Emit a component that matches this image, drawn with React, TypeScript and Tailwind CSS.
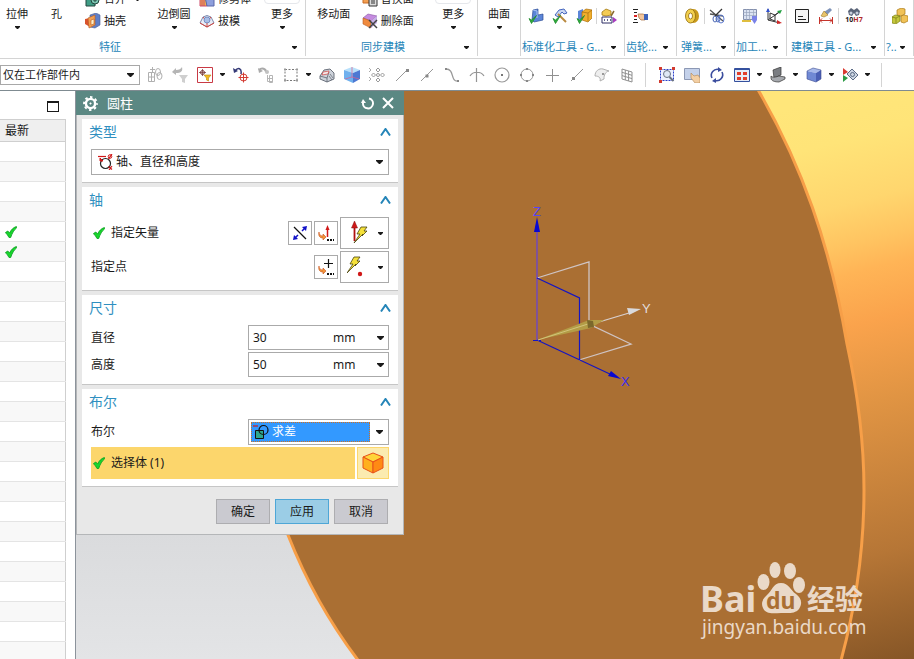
import { Fragment, useState } from "react";
import type { ReactNode } from "react";

const Arrow = ({ className = "" }: { className?: string }) => (
  <svg className={`pointer-events-none h-[3px] w-[5px] shrink-0 ${className}`} viewBox="0 0 5 3">
    <path d="M0 0h5v1L3 3H2L0 1z" fill="#1a1a1a" />
  </svg>
);

const WideArrow = ({ className = "" }: { className?: string }) => (
  <svg className={`pointer-events-none h-1 w-[7px] shrink-0 ${className}`} viewBox="0 0 7 4">
    <path d="M0 0h7v1L4 4H3L0 1z" fill="#1a1a1a" />
  </svg>
);

const Tick = () => (
  <svg className="h-3 w-3 shrink-0" viewBox="0 0 12 12">
    <path
      d="M.4 6.600l2.400-1.600 1.800 2C6 4 8 1.600 11.400.5l.3 1.300C9 4 7.200 7 5.700 11.500H4C3 9.500 1.800 8 .4 6.600z"
      fill="#17d62c"
      stroke="#0a9a20"
      strokeWidth=".8"
    />
  </svg>
);

const Icon = ({ children, size = "h-4 w-4" }: { children: ReactNode; size?: string }) => (
  <svg className={`shrink-0 ${size}`} viewBox="0 0 16 16" fill="none">
    {children}
  </svg>
);

const GreenTick = () => <path d="M1 10.500l2.500 1.500L8.500 7.500l-5 8z" fill="#2fae3c" stroke="#1f8a2c" strokeWidth=".8" />;

const icons: Record<string, ReactNode> = {
  unite: (
    <>
      <path d="M1 3h9v12H1z" fill="#3f9d86" stroke="#24463f" />
      <circle cx="10" cy="9" r="4" fill="#7cc6b2" stroke="#24463f" />
      <path d="M10 7v4M8 9h4" stroke="#24463f" />
    </>
  ),
  shell: (
    <>
      <path d="M5 2l6-2 4 2v10l-5 3-5-1z" fill="#5f7fc8" stroke="#4d5f96" strokeWidth=".6" />
      <path d="M0 6l5-1v9l-5-3z" fill="#d9532d" />
      <path d="M3 5l7-3v10l-6 3z" fill="#f3a052" stroke="#b55a22" strokeWidth=".6" />
      <path d="M6 7l3-1v5l-3 1z" fill="#fff0c8" stroke="#b55a22" strokeWidth=".6" />
    </>
  ),
  trim: (
    <>
      <path d="M1 4h7v11H1z" fill="#f0b44c" stroke="#cc4a6a" />
      <path d="M6 6c4-3 7 0 9 2v7H8z" fill="#8e9fdc" stroke="#5b66a8" />
      <path d="M3 5v10M5 5v10" stroke="#cc4a6a" />
    </>
  ),
  draft: (
    <>
      <path d="M1 10L4 4q4-3 8 0l3 6-7 4z" fill="#e8edf7" stroke="#7d88ad" />
      <path d="M1 10l7 4 7-4M8 8v6M4 4l4 5 4-5" stroke="#d7473d" />
      <circle cx="8" cy="7" r="3" fill="#a9bfe8" stroke="#5f78b5" strokeWidth=".7" />
    </>
  ),
  replace: (
    <>
      <path d="M1 2h9v10H1z" fill="#f3a052" stroke="#c96a24" />
      <path d="M7 8h8v7H7z" fill="#dcdcdc" stroke="#333" />
      <path d="M9 10h4M9 12h4" stroke="#333" />
    </>
  ),
  remove: (
    <>
      <path d="M1 5l5-4 9 2-6 5z" fill="#c58be0" stroke="#8a55a5" strokeWidth=".6" />
      <path d="M1 5l8 3v7l-8-4z" fill="#f08b3e" stroke="#b55a22" strokeWidth=".6" />
      <path d="M9 8l6-5v7l-6 5z" fill="#c7b1e6" />
      <path d="M7 7l8 8M15 7l-8 8" stroke="#444" strokeWidth="1.500" />
    </>
  ),
  std1: (
    <>
      <path d="M5 2l5-1v6l5-1v6l-9 2-2-2z" fill="#5c86d8" stroke="#2d4c96" strokeWidth=".7" />
      <path d="M5 2l4 1v7" stroke="#a9c3f4" />
      <GreenTick />
    </>
  ),
  std2: (
    <>
      <path d="M3 7l4-5 5-1 3 4-3 1-2-2-4 5z" fill="#c9d6f2" stroke="#3458b8" strokeWidth=".9" />
      <path d="M6 6l8 8" stroke="#b98a3f" strokeWidth="2" />
      <GreenTick />
    </>
  ),
  std3: (
    <>
      <path d="M2 3l5-2v10l-5 1z" fill="#5c86d8" />
      <path d="M6 4l4-3 6 1v8l-4 4-6-2z" fill="#f0ae2c" stroke="#a86d10" strokeWidth=".7" />
      <path d="M6 4l6 1v8M12 5l4-3" stroke="#a86d10" strokeWidth=".7" />
      <GreenTick />
    </>
  ),
  std4: (
    <>
      <path d="M1 4l4-3 5 2v4l-5 1-4-1z" fill="#f4cc55" stroke="#a37a14" strokeWidth=".8" />
      <path d="M13 3l-3 5" stroke="#8a6a30" strokeWidth="1.500" />
      <path d="M1 9h10v6H1z" fill="#fff" stroke="#2e2e66" />
      <path d="M3 12h1M6 12h1M9 12h1" stroke="#2e2e66" strokeWidth="1.500" />
      <path d="M12 9l4 3-4 3z" fill="#a93bc0" />
    </>
  ),
  gear: (
    <>
      <path d="M1 1.500h5M2 4.500h3M2 11.500h3M1 14.500h5" stroke="#222" />
      <path d="M6 6h5l2 1v5H9L7 10z" fill="#f3c69b" stroke="#a86b3a" strokeWidth=".7" />
      <path d="M12 6h4v6h-4z" fill="#3f63b8" />
      <path d="M2 8h3" stroke="#d22" strokeWidth="2" />
    </>
  ),
  spring: (
    <>
      <ellipse cx="9.500" cy="8" rx="5.500" ry="7" fill="#c99a1c" />
      <ellipse cx="6.500" cy="8" rx="5" ry="7" fill="#f2cf4d" stroke="#8f6a0c" strokeWidth=".8" />
      <ellipse cx="6.500" cy="8" rx="2" ry="3" fill="#fff" stroke="#8f6a0c" strokeWidth=".8" />
    </>
  ),
  cutSpring: (
    <>
      <path d="M1 2l13 11M1 6l13 2" stroke="#555" strokeWidth="1.300" />
      <ellipse cx="6" cy="11" rx="2" ry="3" stroke="#4a67b5" />
      <ellipse cx="9" cy="11" rx="2" ry="3" stroke="#4a67b5" />
      <ellipse cx="12" cy="11" rx="3" ry="4" stroke="#5d7bd0" />
      <path d="M13 1L6 8" stroke="#333" strokeWidth="1.300" />
    </>
  ),
  mill: (
    <>
      <path d="M1.500 1.500h13v10h-13z" fill="#dbe3f2" stroke="#8490ad" />
      <path d="M1 4.500h13M1 7.500h13M4.500 1v11M7.500 1v11M11.500 1v11" stroke="#9aa5bd" strokeWidth=".7" />
      <path d="M0 13h9" stroke="#dfbe3f" strokeWidth="2" />
      <path d="M10 8h5v4l-2.500 4L10 12z" fill="#7a82e8" />
    </>
  ),
  axes: (
    <>
      <path d="M2 12V1M2 12l12 3M2 12L15 3" stroke="#333" />
      <path d="M4 5l5 2v6L4 11zM9 7l4-3" stroke="#333" />
      <path d="M0 4l2-4 2 4z" fill="#3050d0" />
      <path d="M11 3l5-1-2 4z" fill="#22a040" />
      <path d="M11 12l5 3-5 1z" fill="#d02828" />
    </>
  ),
  note: (
    <>
      <path d="M1.500 1.500h13v13h-13z" fill="#f4f4f4" stroke="#222" />
      <path d="M4 8.500h5M4 11.500h8" stroke="#222" />
    </>
  ),
  brush: (
    <>
      <path d="M12 0l2 2-5 5-3-3z" fill="#7f93b8" />
      <path d="M6 3l4 4-4 2-3-1z" fill="#e9c46a" stroke="#9c7b2b" strokeWidth=".6" />
      <path d="M1.500 9v7M14.500 9v7M2 12.500h12M4 10.500l-2 2 2 2M12 10.500l2 2-2 2" stroke="#c5342c" />
    </>
  ),
  blocks: (
    <>
      <path d="M5 2l4-2 4 1v5l-4 2-4-1z" fill="#f1c257" stroke="#a87919" strokeWidth=".7" />
      <path d="M9 8l3-1 4 1v5l-4 2-3-1z" fill="#f1c257" stroke="#a87919" strokeWidth=".7" />
      <path d="M0 9l3-2 5 1v5l-4 3-4-1z" fill="#c3c73c" stroke="#7b7d14" strokeWidth=".7" />
      <path d="M0 9l4 1v5M4 10l4-2" stroke="#7b7d14" strokeWidth=".7" />
    </>
  ),
  tree: (
    <>
      <path d="M1.500 5.500h6v9h-6zM1.500 10h6M4.500 5v9M5.500 0v5M3 2.500h5" stroke="#b0b0b0" />
      <ellipse cx="11" cy="5" rx="2.500" ry="3.500" stroke="#b0b0b0" />
      <ellipse cx="12.500" cy="9" rx="2.500" ry="3.500" stroke="#b0b0b0" />
    </>
  ),
  resetFilter: (
    <>
      <path d="M0 5l4-4v2c3 0 5-1 6-3 1 4-1 6-6 6v2z" fill="#b5b5b5" />
      <path d="M7 8h9l-3 4v4l-3-1v-3z" fill="#cfcfcf" />
    </>
  ),
  filter: (
    <>
      <path d="M.5.5h15v15H.5z" fill="#fff" stroke="#c93a45" />
      <circle cx="5.500" cy="5.500" r="2" stroke="#7a3b3b" />
      <path d="M5.500 2v7M2 5.500h7" stroke="#7a3b3b" strokeWidth=".8" />
      <path d="M7 8h7l-2.500 3v3l-2-1v-2z" fill="#f3b91e" stroke="#ba860c" strokeWidth=".6" />
    </>
  ),
  undoPick: (
    <>
      <path d="M2 4c3-4 7-3 6 3" stroke="#353a77" strokeWidth="1.500" />
      <path d="M0 1l1 5 4-2z" fill="#353a77" />
      <circle cx="10.500" cy="10.500" r="3.500" stroke="#d33b32" />
      <path d="M10.500 5.500v10M5.500 10.500h10" stroke="#d33b32" />
    </>
  ),
  replay: (
    <>
      <path d="M1 3c3-3 7-1 7 2" stroke="#aaa" strokeWidth="2" />
      <path d="M0 1l1 5 4-2z" fill="#aaa" />
      <circle cx="9" cy="5" r="2" fill="#c2c2c2" />
      <path d="M9.500 8v6.500h5M9.500 11.500h5M11.500 8.500h3v7h-3z" stroke="#b5b5b5" />
    </>
  ),
  marquee: (
    <>
      <path d="M2 2.500h12v11H2z" stroke="#777" strokeDasharray="2 1.500" />
      <path d="M1 1.500h2v2H1zM13 1.500h2v2h-2zM1 12.500h2v2H1zM13 12.500h2v2h-2z" fill="#999" />
    </>
  ),
  faceBody: (
    <>
      <path d="M1 9l4-6 6-1 4 4v6l-7 3-7-3z" fill="#cdd2da" stroke="#5d6470" strokeWidth=".9" />
      <path d="M1 9l7 2 2-6M8 11v4" stroke="#5d6470" strokeWidth=".8" />
      <path d="M4 5l6-1-1 3-6 1z" fill="#f3e9e9" stroke="#d04444" strokeWidth=".7" />
      <path d="M11 7l3 4M10 9l3 4" stroke="#5d6470" strokeWidth=".7" />
    </>
  ),
  cubeBlue: (
    <>
      <path d="M0 3l8-3 8 3-7 3z" fill="#b8e0fb" />
      <path d="M0 3l9 3v10l-9-4z" fill="#6fb0ee" />
      <path d="M9 6l7-3v9l-7 4z" fill="#4d79d3" />
      <path d="M8 0v10M8 10l-7 2M8 10l7 2" stroke="#e05b8b" strokeWidth=".7" />
    </>
  ),
  pattern: (
    <>
      <path d="M0 1l2 2-2 2M0 10l2 2-2 2" stroke="#aaa" />
      <circle cx="9" cy="8" r="1.500" stroke="#999" />
      <path d="M9 1l2 2-2 2-2-2zM9 11l2 2-2 2-2-2zM13.500 6l2 2-2 2-2-2zM4.500 6l2 2-2 2-2-2z" stroke="#999" />
    </>
  ),
  line1: (
    <>
      <path d="M2 14L13 3" stroke="#999" />
      <path d="M12 2h3v3h-3z" fill="#888" />
    </>
  ),
  line2: (
    <>
      <path d="M2 14L14 2" stroke="#999" />
      <path d="M6.500 7.500h3v3h-3z" fill="#888" />
    </>
  ),
  curve: (
    <>
      <path d="M2 2c9 0 4 13 12 12" stroke="#999" strokeWidth="1.300" />
      <path d="M1 1h2v2H1zM13 13h2v2h-2z" fill="#888" />
    </>
  ),
  intersect: <path d="M7.500 1v14M1 9c3-5 11-5 14 0" stroke="#959595" strokeWidth="1.200" />,
  circleCenter: (
    <>
      <circle cx="8" cy="8" r="7" stroke="#999" strokeWidth="1.200" />
      <path d="M7 7h2v2H7z" fill="#777" />
    </>
  ),
  quadrant: (
    <>
      <circle cx="8" cy="8" r="6" stroke="#999" />
      <path d="M7 1h2v2H7zM7 13h2v2H7zM1 7h2v2H1zM13 7h2v2h-2z" fill="#888" />
    </>
  ),
  plus: <path d="M8.500 2v13M2 8.500h13" stroke="#909090" />,
  line3: (
    <>
      <path d="M2 14L14 2" stroke="#999" />
      <path d="M3 10h3v3H3z" fill="#888" />
    </>
  ),
  surface: (
    <>
      <path d="M1 9c0-5 4-8 8-7l6 2c-4 1-5 4-5 8l-4 2c1-3-1-5-5-5z" fill="#eee" stroke="#b0b0b0" />
      <path d="M8 6h2v2H8z" fill="#999" />
    </>
  ),
  grid: <path d="M3 2l10 3v10L3 12zM3 5.300l10 3M3 8.600l10 3M6.300 3v10M9.600 4v10" stroke="#909090" />,
  fit: (
    <>
      <path d="M1.500 2.500h13v11h-13z" fill="#eef2ff" stroke="#2a3fc8" strokeDasharray="2 1" />
      <path d="M0 0h3v3H0zM13 0h3v3h-3zM0 13h3v3H0z" fill="#d23a2f" />
      <circle cx="8" cy="7" r="3.500" fill="#dfe9f5" stroke="#6a7380" />
      <path d="M10.500 10l4 4" stroke="#6a7380" strokeWidth="2" />
    </>
  ),
  pan: (
    <>
      <path d="M.5 1.500h15v11H.5z" fill="#c4d1ea" stroke="#8c98b4" />
      <path d="M7 6l3 3 4-1 2 3v5h-5L7 11z" fill="#f3cfa4" stroke="#b08550" strokeWidth=".6" />
    </>
  ),
  rotate: (
    <>
      <path d="M3 11A6 6 0 0 1 10 2.500M13 5A6 6 0 0 1 6 13.500" stroke="#3b4d9e" strokeWidth="1.600" />
      <path d="M9 0l4 3-4 2zM7 11l-4 3 4 2z" fill="#3b4d9e" />
    </>
  ),
  layout: (
    <>
      <path d="M.5 1.500h15v13H.5z" fill="#e7ecf7" stroke="#34509e" />
      <path d="M1 2h14v1H1z" fill="#34509e" />
      <path d="M3 5h4v3H3zM9 5h4v3H9zM3 10h4v3H3zM9 10h4v3H9z" fill="#e23e2b" />
    </>
  ),
  section: (
    <>
      <path d="M3 3l8-3v8l-7 3z" fill="#7a7d82" stroke="#333" strokeWidth=".7" />
      <path d="M1 9c2 2 5 1 8 0l6 1v2l-6 3c-4 0-8-1-8-4z" fill="#a6a9ae" stroke="#333" strokeWidth=".7" />
    </>
  ),
  shaded: (
    <>
      <path d="M1 4l6-3 8 2-5 3z" fill="#a7b9ea" />
      <path d="M1 4l9 2v9l-9-3z" fill="#7089d4" />
      <path d="M10 6l5-3v9l-5 3z" fill="#4a5fb4" />
      <path d="M1 4l6-3 8 2v9l-5 3-9-3z" stroke="#3c4c90" strokeWidth=".6" />
    </>
  ),
  show: (
    <>
      <path d="M1 1l5 4-5 3z" fill="#da3b32" />
      <path d="M1 8l5 3-5 4z" fill="#2d9c46" />
      <path d="M5 7l5-5 6 6-5 5z" fill="#ccd5e2" stroke="#5b6b85" />
      <circle cx="10.500" cy="7.500" r="2" stroke="#5b6b85" />
    </>
  ),
  type: (
    <>
      <circle cx="8.500" cy="9.500" r="5" stroke="#222" strokeWidth="1.200" />
      <path d="M1 2.500h8" stroke="#d01818" strokeWidth="1.200" />
      <path d="M3 7V4l3 3z" fill="#d01818" stroke="#d01818" />
      <circle cx="13" cy="2.500" r="1.800" stroke="#d01818" />
      <path d="M11.500 5L15 0M11.500 12.500l3.500 3M15 12l-3 4" stroke="#d01818" strokeWidth="1.200" />
    </>
  ),
  reverse: (
    <>
      <path d="M2 2l12 12" stroke="#111" strokeWidth="1.200" />
      <path d="M3 13l3-3M10 6l3-3" stroke="#1010c8" strokeWidth="1.500" />
      <path d="M15 1l-1 5-4-4zM1 15l1-5 4 4z" fill="#1010c8" />
    </>
  ),
  vectorDialog: (
    <>
      <path d="M9.500 4v8" stroke="#d01818" strokeWidth="1.500" />
      <path d="M7.500 5l2-5 2 5z" fill="#d01818" />
      <path d="M1 7c0 3 2 4 4 4V9l3 3-3 3v-2C2 13 0 11 1 7z" fill="#f2963a" stroke="#c8501c" strokeWidth=".6" />
      <path d="M9 14h2v2H9zM12 14h2v2h-2zM15 14h1v2h-1z" fill="#111" />
    </>
  ),
  pointDialog: (
    <>
      <path d="M10.500 0v9M6 4.500h9" stroke="#111" strokeWidth="1.200" />
      <path d="M1 7c0 3 2 4 4 4V9l3 3-3 3v-2C2 13 0 11 1 7z" fill="#f2963a" stroke="#c8501c" strokeWidth=".6" />
      <path d="M9 14h2v2H9zM12 14h2v2h-2zM15 14h1v2h-1z" fill="#111" />
    </>
  ),
  boolean: (
    <>
      <path d="M2.500 6.500h8v8h-8z" fill="#2ea68c" stroke="#111" />
      <circle cx="10.500" cy="6" r="4.500" stroke="#111" strokeWidth="1.200" />
      <path d="M0 2h5" stroke="#d01818" strokeWidth="1.200" />
    </>
  ),
};

const BigButton = ({ text, arrow, boxed, width }: { text: string; arrow?: boolean; boxed?: boolean; width: string }) => (
  <button className={`relative flex flex-col items-center pt-1.5 text-[11px] leading-4 ${width}`}>
    {boxed && <span className="absolute -top-2 h-3 w-9 rounded border border-gray-200" />}
    {text}
    {arrow && <Arrow className="mt-1" />}
  </button>
);

const Stack = ({ items, width }: { items: [string, string, boolean?][]; width: string }) => (
  <div className={`-mt-3 ${width}`}>
    {items.map(([icon, text, arrow]) => (
      <button key={text} className="flex h-[22px] items-center gap-[3px] text-[11px] whitespace-nowrap">
        <Icon>{icons[icon]}</Icon>
        {text}
        {arrow && <Arrow className="ml-1.5" />}
      </button>
    ))}
  </div>
);

const Group = ({
  label,
  width,
  align = "pl-px",
  children,
}: {
  label?: string;
  width: string;
  align?: string;
  children: ReactNode;
}) => (
  <section className={`flex h-14 shrink-0 flex-col border-r border-[#d4d4d4] ${width}`}>
    <div className="flex h-10 items-start">{children}</div>
    {label && (
      <div className="flex h-[18px] items-center justify-between pr-2 text-[11px] leading-4 whitespace-nowrap text-[#2585b8]">
        <span className={align}>{label}</span>
        <Arrow />
      </div>
    )}
  </section>
);

// "|" stands for a divider between two tools
const Tools = ({ names }: { names: string[] }) => (
  <div className="flex pt-2 pl-[3px]">
    {names.map((name, i) =>
      name === "|" ? (
        <span key={i} className="h-4 w-px bg-[#d4d4d4]" />
      ) : (
        <button key={i} className="flex w-6 justify-center" aria-label={name}>
          <Icon>{icons[name]}</Icon>
        </button>
      )
    )}
  </div>
);

const Ribbon = () => (
  <header className="flex h-[59px] shrink-0 overflow-hidden border-b border-[#d4d4d4]">
    <Group label="特征" width="w-[306px]" align="flex-1 pr-[72px] text-center">
      <BigButton text="拉伸" arrow width="w-[34px]" />
      <BigButton text="孔" width="w-[45px]" />
      <Stack
        items={[
          ["unite", "合并", true],
          ["shell", "抽壳"],
        ]}
        width="w-[72px] pl-1.5"
      />
      <BigButton text="边倒圆" arrow width="w-[46px]" />
      <Stack
        items={[
          ["trim", "修剪体"],
          ["draft", "拔模"],
        ]}
        width="w-16 pl-0.5"
      />
      <BigButton text="更多" arrow boxed width="w-[42px]" />
    </Group>
    <Group label="同步建模" width="w-[172px]" align="flex-1 pr-1 text-center">
      <BigButton text="移动面" width="w-14" />
      <Stack
        items={[
          ["replace", "替换面"],
          ["remove", "删除面"],
        ]}
        width="w-[68px]"
      />
      <BigButton text="更多" arrow boxed width="w-12" />
    </Group>
    <Group width="w-[43px]">
      <BigButton text="曲面" arrow width="w-[42px]" />
    </Group>
    <Group label="标准化工具 - G..." width="w-[104px]">
      <Tools names={["std1", "std2", "std3", "|", "std4"]} />
    </Group>
    <Group label="齿轮..." width="w-[52px]">
      <Tools names={["gear"]} />
    </Group>
    <Group label="弹簧..." width="w-[58px]" align="pl-1">
      <Tools names={["spring", "|", "cutSpring"]} />
    </Group>
    <Group label="加工..." width="w-[52px]">
      <Tools names={["mill", "axes"]} />
    </Group>
    <Group label="建模工具 - G..." width="w-[98px]" align="pl-1">
      <Tools names={["note", "brush", "|"]} />
      <button className="flex w-[30px] flex-col items-center pt-2" aria-label="10H7">
        <svg className="h-2 w-3.5" viewBox="0 0 14 8">
          <path d="M1 3l3-3 3 2 3-2 3 3-1 4-3 1-2-3-2 3-3-1z" fill="#5a6478" />
          <circle cx="4" cy="5" r="1.500" fill="#c8d0de" />
          <circle cx="10" cy="5" r="1.500" fill="#c8d0de" />
        </svg>
        <span className="text-[7px] leading-2 font-bold">
          10<span className="text-[#b02a2a]">H7</span>
        </span>
      </button>
    </Group>
    <Group label="?.." width="w-[29px]">
      <Tools names={["blocks"]} />
    </Group>
  </header>
);

const pickTools: [string, boolean?][] = [
  ["tree"],
  ["resetFilter"],
  ["filter", true],
  ["undoPick"],
  ["replay"],
  ["marquee", true],
  ["faceBody"],
  ["cubeBlue"],
  ["pattern"],
  ["line1"],
  ["line2"],
  ["curve"],
  ["intersect"],
  ["circleCenter"],
  ["quadrant"],
  ["plus"],
  ["line3"],
  ["surface"],
  ["grid"],
];

const viewTools: [string, boolean?][] = [
  ["fit"],
  ["pan"],
  ["rotate"],
  ["layout", true],
  ["section", true],
  ["shaded", true],
  ["show", true],
];

const ToolStrip = ({ tools }: { tools: [string, boolean?][] }) => (
  <>
    {tools.map(([name, arrow]) => (
      <Fragment key={name}>
        <button className="flex w-[25px] shrink-0 justify-center" aria-label={name}>
          <Icon>{icons[name]}</Icon>
        </button>
        {arrow && <Arrow className="mx-[3px]" />}
      </Fragment>
    ))}
  </>
);

const SelectionBar = () => (
  <div className="flex h-8 shrink-0 items-center overflow-hidden border-b border-[#7f8b91]">
    <label className="relative mr-0.5 flex w-[140px] shrink-0 items-center">
      <select
        aria-label="选择范围"
        className="h-5 w-full appearance-none border border-[#a8a8a8] bg-white pl-0.5 text-[11px] leading-4"
      >
        <option>仅在工作部件内</option>
      </select>
      <WideArrow className="absolute right-1.5" />
    </label>
    <ToolStrip tools={pickTools} />
    <span className="mr-2 ml-1.5 h-6 w-px bg-[#d4d4d4]" />
    <ToolStrip tools={viewTools} />
    <span className="ml-2 h-6 w-px bg-[#d4d4d4]" />
  </div>
);

const rows = Array.from({ length: 26 }, (_, i) => i === 4 || i === 5);

const Navigator = () => (
  <aside className="w-[75px] shrink-0">
    <div className="flex h-7 items-center justify-end pt-0.5 pr-4">
      <button aria-label="还原" className="h-[11px] w-3 border border-t-2 border-[#1a1a1a]" />
    </div>
    <table className="w-[66px] border-collapse border-t border-r border-[#cfcfcf]">
      <thead>
        <tr className="h-[22px] border-b border-[#cfcfcf]">
          <th className="bg-[#efefef] pl-[5px] text-left text-xs leading-4 font-normal">最新</th>
        </tr>
      </thead>
      <tbody>
        {rows.map((updated, i) => (
          <tr key={i} className="h-5 border-b border-[#e4e4e4] even:bg-[#f8f8f8]">
            <td className="p-0 pl-[5px]">{updated && <Tick />}</td>
          </tr>
        ))}
      </tbody>
    </table>
  </aside>
);

const Viewport = () => (
  <svg className="absolute inset-0 h-full w-full" viewBox="76 91 838 568" preserveAspectRatio="xMinYMin slice">
    <defs>
      <linearGradient id="sky" x1="0" y1="91" x2="0" y2="659" gradientUnits="userSpaceOnUse">
        <stop offset="0" stopColor="#b4b6ba" />
        <stop offset=".78" stopColor="#dadbdd" />
        <stop offset="1" stopColor="#e3e4e6" />
      </linearGradient>
      <linearGradient id="side" x1="780" y1="110" x2="920" y2="660" gradientUnits="userSpaceOnUse">
        <stop offset="0" stopColor="#ffe67a" />
        <stop offset=".08" stopColor="#ffe478" />
        <stop offset=".19" stopColor="#ffd66e" />
        <stop offset=".26" stopColor="#ffc461" />
        <stop offset=".31" stopColor="#ffb456" />
        <stop offset=".4" stopColor="#faa34c" />
        <stop offset=".54" stopColor="#e09443" />
        <stop offset=".8" stopColor="#b67636" />
        <stop offset="1" stopColor="#855526" />
      </linearGradient>
    </defs>
    <path d="M76 91h838v568H76z" fill="url(#sky)" />
    <path d="M404 91h510v568H404z" fill="url(#side)" />
    <path
      d="M200 88H757C802 165 830 245 847 344C857 390 864 435 864 490C864 550 855 610 840 664H361C330 624 305 578 288 535L240 400z"
      fill="#aa6f33"
      stroke="#f79f48"
      strokeWidth="3"
    />
    <path d="M537 278l52-16v62l42 20-52 16" fill="none" stroke="#cfc4c4" strokeWidth="1.300" />
    <path d="M589 325l40-12" stroke="#d8d0d0" strokeWidth="1.300" />
    <path d="M627 308l14 1-12 6z" fill="#d9d9dc" />
    <path d="M537 341V225" stroke="#6440dc" strokeWidth="1.200" />
    <path d="M534 232l3-15 3 15z" fill="#0808d0" />
    <path d="M537 278l42.500 20V360M537 340l75 35" fill="none" stroke="#1414c4" strokeWidth="1.200" />
    <path d="M533 340.500h8" stroke="#1414c4" />
    <path d="M608 376l3-5 10 8z" fill="#0808d0" />
    <path d="M537 340l52-20 15 0-13 8z" fill="#b39c46" />
    <path d="M538 340l53-17" stroke="#d2c47a" />
    <path d="M587 320l6 1 1 6-6 1z" fill="#7b682c" />
    <g fontFamily="Liberation Sans, sans-serif" fontSize="13">
      <text x="533" y="216" fill="#5546f5">Z</text>
      <text x="621" y="386" fill="#3a2cf0">X</text>
      <text x="642" y="313" fill="#e2dcdc">Y</text>
    </g>
    <g fill="#ead9c8" fontFamily="Noto Sans, Noto Sans CJK SC, sans-serif">
      <text x="700" y="612" fontSize="36" fontWeight="700">Bai</text>
      <ellipse cx="763.500" cy="582" rx="6" ry="8" />
      <ellipse cx="775" cy="570" rx="5.500" ry="8" />
      <ellipse cx="790" cy="571" rx="6" ry="8" />
      <ellipse cx="799" cy="585" rx="6" ry="8" />
      <path d="M781 583c-8 0-9 8-14 12-5 4-6 9-4 13 3 7 11 5 18 5s14 1 18-4c4-6 2-11-3-15-6-4-7-11-15-11z" />
      <text x="766" y="609" fontSize="23" fontWeight="700" fill="#aa6f33">du</text>
      <text x="807" y="610" fontSize="28" fontWeight="700">经验</text>
      <text x="702" y="634" fontSize="19">jingyan.baidu.com</text>
    </g>
  </svg>
);

const Panel = ({ title, children }: { title: string; children: ReactNode }) => (
  <section className="border-b border-[#c6c6c6] bg-white px-[9px] pb-[7px]">
    <h3 className="-mx-0.5 mb-1 flex h-[26px] items-center justify-between text-sm text-[#2f8fc0]">
      {title}
      <svg className="h-2 w-[11px]" viewBox="0 0 11 8" fill="none">
        <path d="M1 7.500L5.500 1 10 7.500" stroke="#2585b8" strokeWidth="2" />
      </svg>
    </h3>
    <div className="flex flex-col gap-0.5">{children}</div>
  </section>
);

const SmallButton = ({ icon }: { icon: string }) => (
  <button type="button" aria-label={icon} className="flex h-6 w-6 items-center justify-center border border-[#aaa]">
    <Icon>{icons[icon]}</Icon>
  </button>
);

const Bolt = ({ d }: { d: string }) => <path d={d} fill="#f5e13a" stroke="#4a4410" strokeWidth=".8" />;

const SplitButton = ({ label, children }: { label: string; children: ReactNode }) => (
  <button
    type="button"
    aria-label={label}
    className="flex h-8 w-[49px] items-center justify-between border border-[#aaa] pr-[5px] pl-1.5"
  >
    <svg className="h-6 w-6" viewBox="0 0 24 24">
      {children}
    </svg>
    <Arrow />
  </button>
);

const Measure = ({ label, initial }: { label: string; initial: string }) => {
  const [value, setValue] = useState(initial);

  return (
    <div className="flex h-[25px] items-center justify-between">
      <label htmlFor={label}>{label}</label>
      <div className="relative flex h-full w-[141px] items-center border border-[#aaa]">
        <input
          id={label}
          className="h-full w-20 pl-1 outline-none"
          value={value}
          onChange={(e) => setValue(e.target.value)}
        />
        <select aria-label={`${label}单位`} className="h-full w-14 appearance-none pl-1 outline-none">
          <option>mm</option>
        </select>
        <WideArrow className="absolute right-1" />
      </div>
    </div>
  );
};

const Dialog = () => (
  <form className="absolute top-0 left-0 w-[328px] border border-t-0 border-[#b4b6b8] bg-[#e8e8e8] text-xs">
    <div className="-mx-px flex h-6 items-center bg-[#5b8883] pr-2.5 pl-[7px] text-white">
      <svg className="h-[15px] w-[15px]" viewBox="0 0 15 15" fill="none" stroke="#fff">
        <circle cx="7.500" cy="7.500" r="4.600" strokeWidth="2.400" />
        <circle cx="7.500" cy="7.500" r="6.400" strokeWidth="2" strokeDasharray="2.500 2.526" strokeDashoffset="1.250" />
        <circle cx="7.500" cy="7.500" r=".8" fill="#fff" strokeWidth=".5" />
      </svg>
      <h2 className="ml-[9px] flex-1 text-[13px] leading-4">圆柱</h2>
      <button type="button" aria-label="重置">
        <svg className="h-[13px] w-[13px]" viewBox="0 0 13 13" fill="none">
          <path d="M8 1.500A5 5 0 1 1 2 6" stroke="#fff" strokeWidth="2" />
          <path d="M0 6l2-4 3 4z" fill="#fff" />
        </svg>
      </button>
      <button type="button" aria-label="关闭" className="ml-2">
        <svg className="h-3 w-3" viewBox="0 0 12 12">
          <path d="M1 1l10 10M11 1L1 11" stroke="#fff" strokeWidth="2" />
        </svg>
      </button>
    </div>

    <div className="flex flex-col gap-1 px-[5px] pt-1">
      <Panel title="类型">
        <label className="relative flex items-center">
          <select aria-label="类型" className="h-[26px] w-full appearance-none border border-[#aaa] pl-6">
            <option>轴、直径和高度</option>
          </select>
          <span className="pointer-events-none absolute left-1.5">
            <Icon>{icons.type}</Icon>
          </span>
          <WideArrow className="absolute right-1.5" />
        </label>
      </Panel>

      <Panel title="轴">
        <div className="flex h-8 items-center gap-0.5">
          <span className="flex flex-1 items-center gap-1.5 pl-0.5">
            <Tick />
            指定矢量
          </span>
          <SmallButton icon="reverse" />
          <SmallButton icon="vectorDialog" />
          <SplitButton label="矢量类型">
            <path d="M7.500 7v13" stroke="#b01010" strokeWidth="1.800" />
            <path d="M4.500 7l3-7 3 7z" fill="#d01818" stroke="#801010" strokeWidth=".5" />
            <Bolt d="M14 6h6l-3 4h3l-5 5 1-2-9 9 6-9h-3z" />
          </SplitButton>
        </div>
        <div className="flex h-8 items-center gap-0.5">
          <span className="flex-1">指定点</span>
          <SmallButton icon="pointDialog" />
          <SplitButton label="点类型">
            <Bolt d="M7 2h6l-3 4h3l-5 5 1-2-9 9 6-9H3z" />
            <circle cx="13" cy="19" r="2.200" fill="#d01818" />
          </SplitButton>
        </div>
      </Panel>

      <Panel title="尺寸">
        <Measure label="直径" initial="30" />
        <Measure label="高度" initial="50" />
      </Panel>

      <Panel title="布尔">
        <div className="flex h-[26px] items-center justify-between">
          <label htmlFor="boolean">布尔</label>
          <div className="relative flex h-full w-[141px] items-center border border-[#aaa] p-0.5 pr-[18px]">
            <select
              id="boolean"
              className="h-full w-full appearance-none border border-dotted border-[#d07020] bg-[#3399ff] pl-5 leading-4 text-white"
            >
              <option>求差</option>
            </select>
            <span className="pointer-events-none absolute left-1">
              <Icon>{icons.boolean}</Icon>
            </span>
            <WideArrow className="absolute right-[5px]" />
          </div>
        </div>
        <div className="flex h-8 gap-0.5">
          <span className="flex flex-1 items-center gap-1.5 bg-[#fcd66c] pl-0.5">
            <Tick />
            选择体 (1)
          </span>
          <button
            type="button"
            aria-label="体"
            className="flex w-8 items-center justify-center border border-[#fcd66c] bg-[#fbebb0]"
          >
            <svg className="h-[22px] w-[22px]" viewBox="0 0 22 22" stroke="#e8501a" strokeLinejoin="round">
              <path d="M1 5l10-4 10 4-10 5z" fill="#ffd53a" />
              <path d="M1 5l10 5v11L1 16z" fill="#ffb01e" />
              <path d="M21 5l-10 5v11l10-5z" fill="#ff8a14" />
            </svg>
          </button>
        </div>
      </Panel>
    </div>

    <div className="flex justify-end gap-[5px] px-[15px] pt-3 pb-2.5">
      <button type="button" className="h-[25px] w-[54px] border border-[#adadb0] bg-[#cacad0]">确定</button>
      <button type="button" className="h-[25px] w-[54px] border border-[#4ea6d6] bg-[#9bcde6]">应用</button>
      <button type="button" className="h-[25px] w-[54px] border border-[#adadb0] bg-[#cacad0]">取消</button>
    </div>
  </form>
);

export default function App() {
  return (
    <div className="flex h-screen flex-col overflow-hidden bg-white font-['Noto_Sans','Noto_Sans_CJK_SC',sans-serif] text-[#1a1a1a]">
      <Ribbon />
      <SelectionBar />
      <main className="flex min-h-0 flex-1">
        <Navigator />
        <div className="relative flex-1 overflow-hidden border-l border-[#8c939b]">
          <Viewport />
          <Dialog />
        </div>
      </main>
    </div>
  );
}
